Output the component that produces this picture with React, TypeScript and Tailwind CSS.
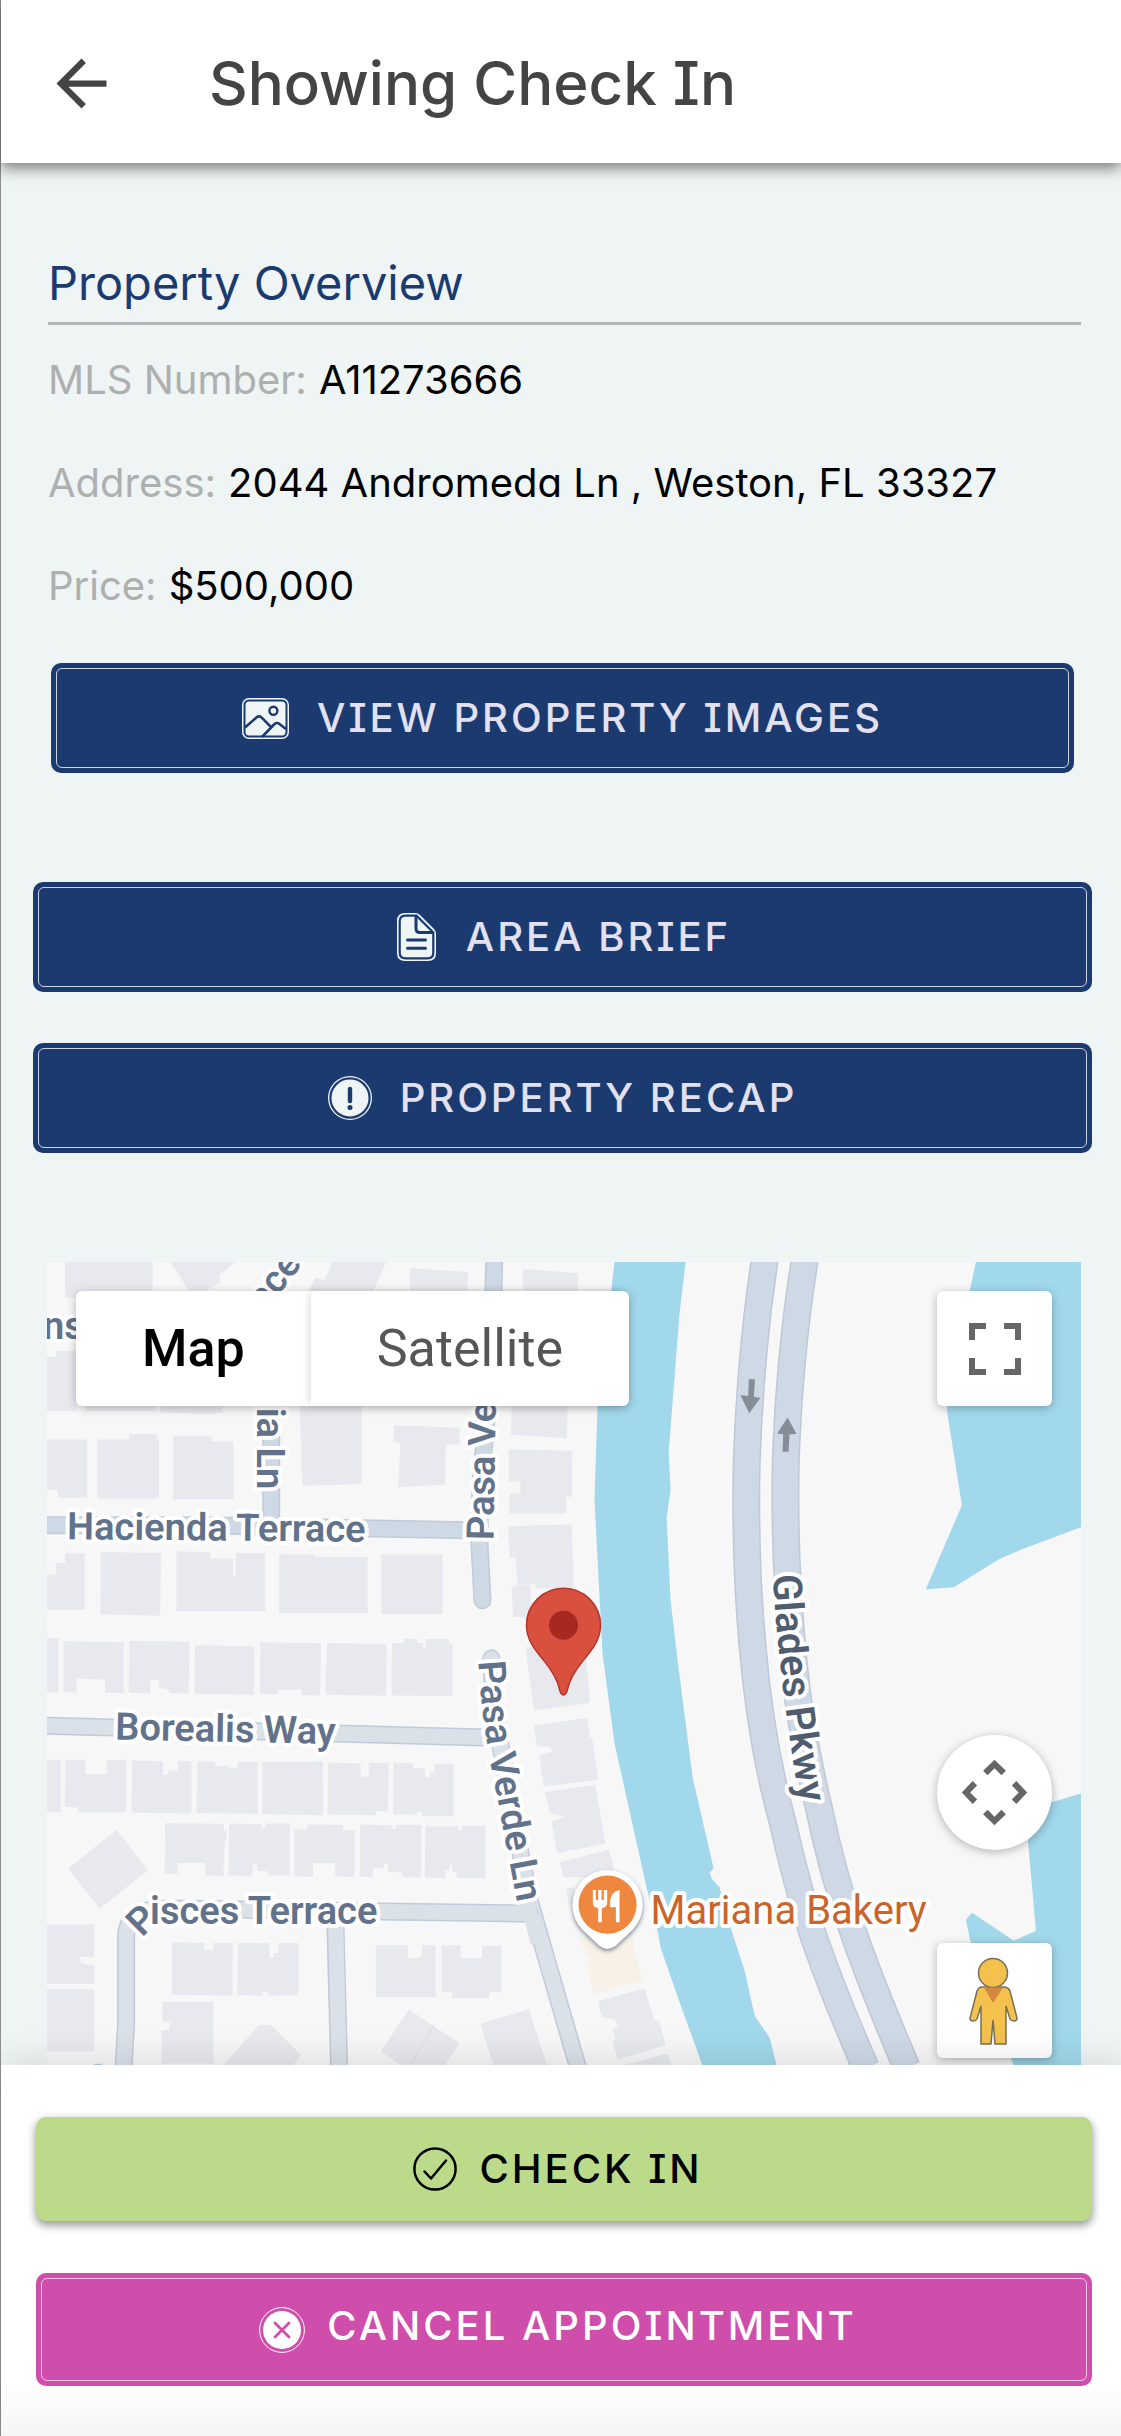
import type { ReactNode } from "react";

const navy = "#1b3b70";
const paper = "#eff4f5";

function ImageIcon() {
  return (
    <svg className="h-[41px] w-[47px] shrink-0" viewBox="0 0 47 41" fill="none" aria-hidden="true">
      <rect width="47" height="41" rx="7" fill={paper} />
      <rect x="2.5" y="2.5" width="42" height="36" rx="4.5" stroke={navy} strokeWidth="2" />
      <circle cx="31.4" cy="12.7" r="4" stroke={navy} strokeWidth="2.4" />
      <path d="M3 29.5 14.5 19.4q2.500-2 5 0L29 29M20 39 32.500 26q2.500-2 5 0L44 31" stroke={navy} strokeWidth="2.6" />
    </svg>
  );
}

function FileIcon() {
  return (
    <svg className="h-[48px] w-[44px] shrink-0" viewBox="-3 0 44 48" fill="none" aria-hidden="true">
      <path d="M8 0H18.500Q21 0 23 2L36.500 15.500Q39 18 39 20.500V40Q39 48 31 48H8Q0 48 0 40V8Q0 0 8 0Z" fill={paper} />
      <path
        d="M8.500 2.700H19.500L36.300 19.500V39.500Q36.300 45.300 30.500 45.300H8.500Q2.700 45.300 2.700 39.500V8.500Q2.700 2.700 8.500 2.700Z"
        stroke={navy}
        strokeWidth="2.2"
      />
      <path d="M19 3V15.500Q19 19.500 23 19.500H36" stroke={navy} strokeWidth="3" />
      <path d="M10.500 27H28.500M10.500 35.300H28.500" stroke={navy} strokeWidth="3" strokeLinecap="round" />
    </svg>
  );
}

function AlertIcon() {
  return (
    <svg className="size-[44px] shrink-0" viewBox="0 0 44 44" fill="none" aria-hidden="true">
      <circle cx="22" cy="22" r="22" fill={paper} />
      <circle cx="22" cy="22" r="19.600" stroke={navy} strokeWidth="2.2" />
      <path d="M22 13V25" stroke={navy} strokeWidth="4.4" strokeLinecap="round" />
      <circle cx="22" cy="31.500" r="2.500" fill={navy} />
    </svg>
  );
}

function CheckIcon() {
  return (
    <svg className="size-[44px] shrink-0" viewBox="0 0 44 44" fill="none" stroke="#000" strokeWidth="2.500" aria-hidden="true">
      <circle cx="22" cy="22" r="20.600" />
      <path d="M11.500 24.500 18 31.500 33 13.500" strokeLinecap="round" strokeLinejoin="round" />
    </svg>
  );
}

function CancelIcon() {
  return (
    <svg className="size-[46px] shrink-0" viewBox="0 0 46 46" fill="none" aria-hidden="true">
      <circle cx="23" cy="23" r="22.400" stroke="#fff" strokeWidth="1" />
      <circle cx="23" cy="23" r="19" fill="#fff" />
      <path d="M16 16 30 30M30 16 16 30" stroke="#cf4dab" strokeWidth="2.800" strokeLinecap="round" />
    </svg>
  );
}

function NavyButton({ icon, children }: { icon: ReactNode; children: ReactNode }) {
  return (
    <button type="button" className="block w-full rounded-[10px] bg-[#1b3b70] p-[5px]">
      <span className="flex items-center justify-center gap-7 rounded-md border border-[#cfd5e0] py-[19px] text-[40px] leading-[60px] font-medium tracking-[3px] text-[#e3e1f0]">
        {icon}
        {children}
      </span>
    </button>
  );
}

function Detail({ label, value }: { label: string; value: string }) {
  return (
    <div className="flex flex-wrap gap-x-3">
      <dt className="text-[#aeb0b0]">{label}</dt>
      <dd className="text-black">{value}</dd>
    </div>
  );
}

function Street({ d, light = false }: { d: string; light?: boolean }) {
  return (
    <g fill="none" strokeLinecap="round" strokeLinejoin="round">
      <path d={d} stroke="#c0cad9" strokeWidth="18" />
      <path d={d} stroke={light ? "#dbe1e9" : "#cfd9e5"} strokeWidth="15" />
    </g>
  );
}

function MapDrawing() {
  return (
    <svg
      className="absolute inset-0 size-full font-[Roboto,sans-serif]"
      viewBox="0 0 1033 803"
      preserveAspectRatio="xMidYMin slice"
      role="img"
      aria-label="Map of the streets around 2044 Andromeda Ln"
    >
      <defs>
        <path id="glades" d="M725 313Q732 430 757 570" />
        <path id="pasa" d="M431 399Q435 465 446 515L475 668" />
        <filter id="poi" x="-30%" y="-30%" width="160%" height="170%">
          <feDropShadow dx="0" dy="2" stdDeviation="2" floodColor="#3b4a66" floodOpacity="0.7" />
        </filter>
      </defs>
      <rect width="1033" height="803" fill="#f7f7f7" />

      <g fill="#e8e9ee">
        <path
          transform="translate(-17 -22) scale(0.357 0.3333)"
          d="M98 65H343V173H98ZM393 65L445 152H490L533 127L530 105L575 65ZM845 65L825 120L798 113L780 152H962L996 65ZM1064 85L1226 96L1224 152H1062ZM1380 87L1534 100V152H1380ZM48 350H72V333H130V512H48ZM157 498H350V512H157ZM365 498H540V516L505 522L365 516ZM48 598H160V773H78V750H48ZM188 598H278V582H355V598H361V775H188ZM400 587H508V604H570V777H400ZM755 498H928V732L762 737ZM1018 555L1202 563V612L1164 614L1162 733L1030 741L1037 610L1018 605ZM1348 500H1505L1502 594L1346 584ZM1340 628L1518 632L1516 770H1500V820H1342V760H1372V724H1340ZM1338 858L1516 852L1522 1045H1415V1032L1364 1034L1358 952H1342ZM1348 1040L1400 1038V1128L1352 1130ZM48 1003H72V968H98V940H153V1108H48ZM198 935L367 938L364 1126L197 1122ZM410 933L505 936V955H568V1008H576V938H658V1113H410ZM697 942L797 943V950H945V1118H697ZM983 943H1155V1120H983Z"
        />
        <path
          transform="translate(-17 378) scale(0.357 0.3333)"
          d="M48 -8H80V156H48ZM94 3L262 6V158L210 157V117L130 115V157L94 155ZM278 1L446 4L444 160L390 158V147L360 142V118H337V159L276 157ZM462 15L628 18L626 163L460 160ZM645 6L814 9L812 165L760 164V148H693V162L643 160ZM831 8L998 11L996 166L827 163ZM1013 9L1045 8V-4H1085V8H1100V24H1108V-4H1172V12H1182V167L1012 165ZM48 358H86V515H48ZM99 358H155V400H216V360L270 358L268 516H135V502L97 498ZM286 360L372 362V403H386V390H414V362H452V520L284 516ZM468 362L518 364V376H555V382H582V364H637V520L466 518ZM651 365L820 363V524L650 521ZM834 366L925 369V408H948V367L1004 368L1002 512H970V524L833 522ZM1017 366L1072 368V383H1106V410H1118V397H1132V370L1186 369V527H1097V514H1082V522L1016 521ZM242 568L330 690L195 804L107 684ZM378 548L542 550V570H550V598H545L541 706L490 704V667H413V700L377 698ZM557 549L648 551V563H660V549H727V705H668V693L636 690V670H624L620 707L556 705ZM740 567H775V552L876 553V568H909V709L854 708V668H792V709L740 707ZM924 552L1014 554V565H1024V553H1094V711L1040 710V696L1002 694V670H990V683H960V710L923 708ZM1106 557L1198 558V570H1208V556H1275V713L1194 712V695H1182V672H1175V686L1162 690V713L1105 711ZM48 852H180V948H142V965L160 972H180V1029H48ZM48 1046H180V1232H48ZM398 905L488 907V927H513V907H567V1065L397 1062ZM582 906L670 908V950H682V937H695V907H751V1064L665 1065V1055H648V1065L580 1063ZM968 914H1058V952H1088V946H1098V914H1135V1070H968ZM1152 914H1205V952H1265V915H1320V1055H1286V1073H1182V1055H1152ZM370 1084H513V1268H368V1168H390V1143H370ZM640 1153H675L759 1243L735 1275H540ZM1060 1106L1202 1208L1160 1275H1040L982 1232ZM1260 1150L1396 1106L1448 1275H1297Z"
        />
        <path
          transform="translate(463 308) scale(0.3333)"
          d="M5 48L60 45V140H8ZM45 230H225L238 398L70 420ZM70 465L230 443L238 500L245 503L264 628L100 648L86 552L125 545L122 535L110 528H80ZM104 665L254 643L285 820L140 847L123 752L160 742L155 735L118 728ZM147 875L295 838L312 900L300 920H160ZM167 953L190 950L200 1020L175 1000Z"
        />
        <path
          transform="translate(513 378) scale(0.3578 0.3333)"
          d="M105 1082L235 1043L262 1140H275L294 1213L160 1257L144 1200L155 1195L145 1165L160 1155L150 1135L115 1130ZM170 1275L300 1238L312 1275Z"
        />
      </g>
      <path transform="translate(513 378) scale(0.3578 0.3333)" d="M50 890H200L228 1020L92 1060L72 970L85 955Z" fill="#f7f1e8" />
      <path d="M364 801L386 763" stroke="#dcdee6" />

      <g fill="#a1d8eb">
        <path d="M567 0L550 145L547 236L549 278L555 391L567 481L599 625L610 668L613 685L635 748L655 803H729L722 775L707 753L697 708L683 665L672 625L664 616L662 610L666 606L645 515L630 398L623 338L619 255L623 228L621 191L632 51L638 0Z" />
        <path d="M928 0L922 28L899 148L914 243L878 327L906 325L951 297L974 287L1033 265V0Z" />
        <path d="M1033 531L1003 540L980 578L988 668L966 678L924 650L918 657L923 681L964 798L966 803H1033Z" />
      </g>

      <g fill="none">
        {[
          "M717 -2Q703 90 699 200Q697 300 705 385Q713 480 735 560Q748 618 764 668Q782 722 818 805",
          "M757 -2Q742 90 738 200Q736 300 746 400Q752 465 771 545Q785 612 805 668Q822 718 859 805",
        ].map((d) => (
          <g key={d}>
            <path d={d} stroke="#bec8d8" strokeWidth="28" />
            <path d={d} stroke="#cfd9e5" strokeWidth="25" />
          </g>
        ))}
      </g>
      <g fill="#868d99" transform="translate(513 -22) scale(0.3578 0.3333)">
        <path d="M526 417L543 418L540 470L558 474L527 519L502 465L524 468Z" />
        <path d="M620 635H637L639 583L659 581L634 532L605 580L622 582Z" />
      </g>

      <Street d="M224 100V263" />
      <Street d="M-12 263H150L422 268" />
      <Street d="M447 -12L444 110L433 220L432 280L435 338" />
      <Street light d="M-12 463L437 475" />
      <Street light d="M444 396L446 445L472 585L483 641L532 810" />
      <Street light d="M482 651L119 646Q79 646 79 675V761L76 812" />
      <path d="M288 658L292 812" stroke="#c0cad9" strokeWidth="18" />
      <path d="M288 646L292 812" stroke="#dbe1e9" strokeWidth="15" />
      <path d="M468 650L482 648L490 680" fill="none" stroke="#dbe1e9" strokeWidth="14" />
      <path d="M47 802H55" stroke="#b7c9f5" strokeWidth="2" />

      <g fill="#62728a" fontSize="38" fontWeight="600" stroke="#fff" strokeWidth="8" strokeLinejoin="round" style={{ paintOrder: "stroke" }}>
        <text x="-4" y="77">ns</text>
        <text transform="translate(218 50) rotate(-52)">ace</text>
        <text transform="translate(210 227) rotate(90)" textAnchor="end">nia Ln</text>
        <text transform="translate(446 278) rotate(-89)">Pasa Verde Ln</text>
        <text transform="translate(20 277) rotate(0.5)">Hacienda Terrace</text>
        <text transform="translate(68 477) rotate(1.2)">Borealis Way</text>
        <text><textPath href="#pasa">Pasa Verde Ln</textPath></text>
        <text x="95" y="675" rotate="-45">P</text>
        <text x="103" y="661">isces Terrace</text>
        <text fill="#4f5d6e" fontSize="40"><textPath href="#glades">Glades Pkwy</textPath></text>
        <text x="603" y="661" fill="#c9652a" fontSize="40" fontWeight="400">Mariana Bakery</text>
      </g>

      <path
        d="M516 326c-20.500 0-37 16.500-37 37 0 14 8 24 18 36 8 10 13 18 15 28 .8 4 1.500 5.500 4 5.500s3.200-1.500 4-5.500c2-10 7-18 15-28 10-12 18-22 18-36 0-20.500-16.500-37-37-37z"
        fill="#d9503f"
        stroke="#b4352b"
        strokeWidth="1.500"
      />
      <circle cx="516" cy="363" r="14.500" fill="#a52920" />

      <path d="M535 667A35 35 0 1 1 585 667L568 683Q560 689 552 683Z" fill="#fff" filter="url(#poi)" />
      <circle cx="560" cy="642" r="29" fill="#ef873e" />
      <path
        transform="translate(463 308) scale(0.3333)"
        d="M247 958h9v30h7v-30h10v30h7v-30h10v37q0 15-16 18v42h-11v-42q-16-3-16-18zM327 958v97h-11v-45h-17v-22q4-26 28-30z"
        fill="#fff"
      />
    </svg>
  );
}

function MapControls() {
  return (
    <>
      <div className="absolute top-[29px] left-[29px] flex rounded-md bg-white font-[Roboto,sans-serif] text-[52px] leading-[115px] shadow-[0_2px_10px_rgba(0,0,0,0.28)]">
        <button type="button" aria-pressed="true" className="px-[66px] font-medium text-black">
          Map
        </button>
        <button type="button" aria-pressed="false" className="rounded-r-md px-[66px] text-[#565656] shadow-[-3px_0_8px_-2px_rgba(0,0,0,0.16)]">
          Satellite
        </button>
      </div>
      <button
        type="button"
        aria-label="Toggle fullscreen view"
        className="absolute top-[29px] right-[29px] flex size-[115px] items-center justify-center rounded-md bg-white shadow-[0_2px_10px_rgba(0,0,0,0.28)]"
      >
        <svg className="size-[52px]" viewBox="0 0 52 52" fill="none" stroke="#666" strokeWidth="6" aria-hidden="true">
          <path d="M3 17V3H17M35 3H49V17M49 35V49H35M17 49H3V35" />
        </svg>
      </button>
      <button
        type="button"
        aria-label="Map camera controls"
        className="absolute top-[473px] right-[29px] size-[115px] rounded-full bg-white shadow-[0_2px_10px_rgba(0,0,0,0.28)]"
      >
        <svg className="size-full" viewBox="-58 -58 116 116" fill="#666" aria-hidden="true">
          {[0, 90, 180, 270].map((angle) => (
            <path key={angle} transform={`rotate(${angle})`} d="M0 -33L11.500 -22L7 -17.500L0 -24.500L-7 -17.500L-11.500 -22Z" />
          ))}
        </svg>
      </button>
      <button
        type="button"
        aria-label="Open Street View"
        className="absolute top-[681px] right-[29px] size-[115px] rounded-md bg-white shadow-[0_2px_10px_rgba(0,0,0,0.28)]"
      >
        <svg className="size-full" viewBox="0 0 115 115" fill="#f3c14c" stroke="#757057" strokeWidth="1.500" aria-hidden="true">
          <path d="M44 44h24q4 1 5 4l7 27q0 3-3 3t-4-2l-4-13v38H58l-2-24-2 24H44V63l-4 13q-1 2-4 2t-3-3l7-27q1-3 4-4z" />
          <circle cx="56" cy="30" r="14.500" />
          <path d="M47 44.500H66L56 60Z" fill="#d5873f" stroke="none" />
        </svg>
      </button>
    </>
  );
}

export default function App() {
  return (
    <div className="flex min-h-screen flex-col border-l border-[#8f8f8f] bg-[#eff4f5] font-[Inter,sans-serif] [font-feature-settings:'cv08','cv11']">
      <header className="relative z-10 flex items-center bg-white pt-[53px] pr-8 pb-[50px] pl-[43px] shadow-[0_5px_14px_rgba(0,0,0,0.5)]">
        <button type="button" aria-label="Go back" className="-my-2 size-[75px]">
          <svg className="size-full" viewBox="0 0 24 24" fill="#444" aria-hidden="true">
            <path d="M20 11H7.830l5.590-5.590L12 4l-8 8 8 8 1.410-1.410L7.830 13H20z" />
          </svg>
        </button>
        <h1 className="ml-[90px] text-[60px] leading-[60px] font-medium text-[#444]">Showing Check In</h1>
      </header>

      <main className="flex flex-1 flex-col">
        <section className="pt-[90px] pr-10 pl-[47px]">
          <h2 className="border-b-[3px] border-[#b4b8b6] pb-[9px] text-[47px] leading-[60px] text-[#1b3b70]">
            Property Overview
          </h2>
          <dl className="mt-[25px] flex flex-col gap-[43px] text-[40px] leading-[60px]">
            <Detail label="MLS Number:" value="A11273666" />
            <Detail label="Address:" value="2044 Andromeda Ln , Weston, FL 33327" />
            <Detail label="Price:" value="$500,000" />
          </dl>
          <div className="mt-[47px] mr-[7px] ml-[3px]">
            <NavyButton icon={<ImageIcon />}>VIEW PROPERTY IMAGES</NavyButton>
          </div>
        </section>

        <section className="mt-[109px] flex flex-col gap-[51px] pr-[29px] pl-8">
          <NavyButton icon={<FileIcon />}>AREA BRIEF</NavyButton>
          <NavyButton icon={<AlertIcon />}>PROPERTY RECAP</NavyButton>
        </section>

        <section aria-label="Map" className="relative mt-[109px] mr-10 ml-[46px] min-h-[803px] flex-1 overflow-hidden">
          <MapDrawing />
          <MapControls />
        </section>
      </main>

      <footer className="relative flex flex-col gap-[52px] bg-linear-to-b from-white from-85% to-[#f5f5f5] pt-[52px] pr-[29px] pb-[50px] pl-[35px] shadow-[0_0_36px_rgba(0,0,0,0.14)]">
        <button
          type="button"
          className="flex items-center justify-center gap-[22px] rounded-[10px] bg-[#bbdb8a] py-[22px] pr-3 text-[40px] leading-[60px] font-medium tracking-[3px] text-black shadow-[0_4px_10px_rgba(0,0,0,0.45)]"
        >
          <CheckIcon />
          CHECK IN
        </button>
        <button type="button" className="block rounded-[10px] bg-[#cf4dab] p-[5px]">
          <span className="flex items-center justify-center gap-[22px] rounded-md border border-[#f3c9e6] pt-[17px] pr-3 pb-4 text-[40px] leading-[60px] font-medium tracking-[3px] text-white">
            <CancelIcon />
            <span className="pb-2">CANCEL APPOINTMENT</span>
          </span>
        </button>
      </footer>
    </div>
  );
}
